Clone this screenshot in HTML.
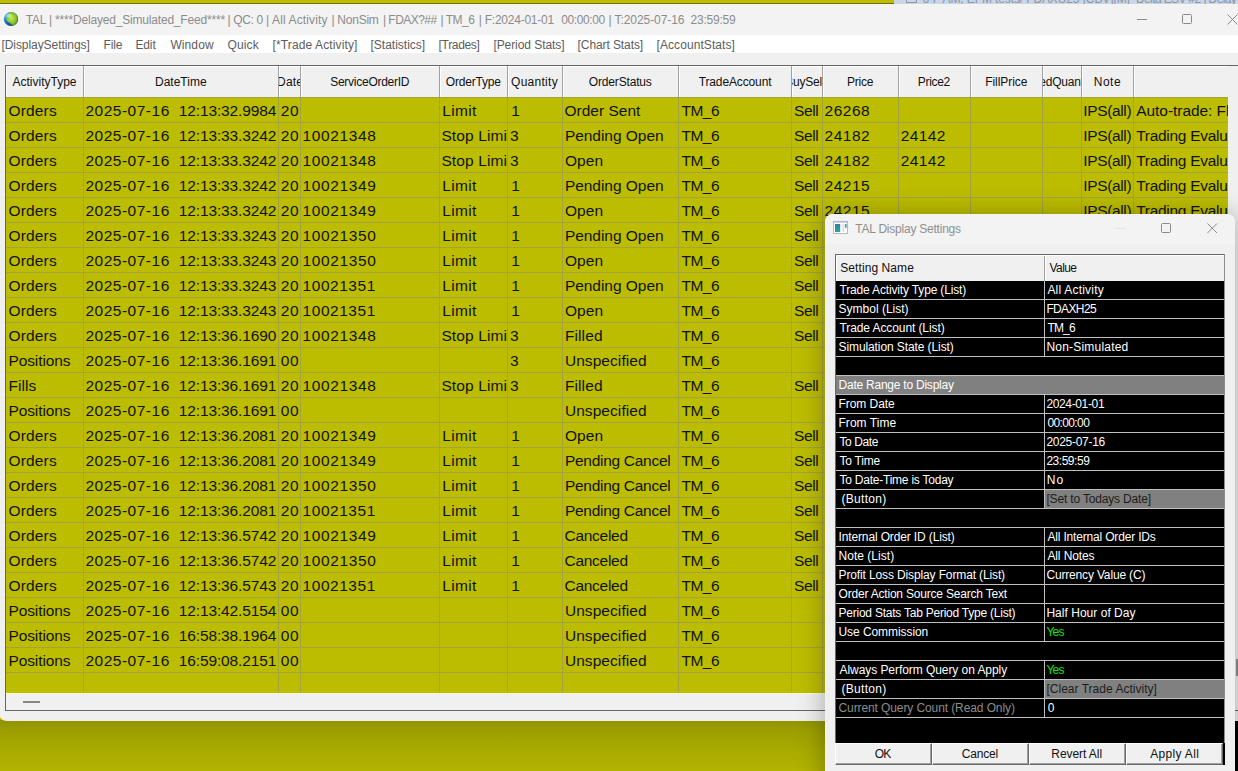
<!DOCTYPE html>
<html lang="en"><head><meta charset="utf-8"><title>TAL</title>
<style>
*{box-sizing:border-box;margin:0;padding:0}
html,body{width:1238px;height:771px;overflow:hidden}
body{position:relative;background:#bdbd00;font-family:"Liberation Sans",sans-serif;font-size:12px;color:#000}
.abs{position:absolute}
#desk{left:0;top:0;width:1238px;height:771px;background:#bcbc00}
#deskbot{left:0;top:720px;width:1238px;height:51px;background:linear-gradient(#909300 0,#9c9e00 10px,#a8aa00 30px,#b2b400 51px)}
#topline{left:0;top:3px;width:894px;height:1px;background:#6e6e10}
#topblue{left:894px;top:0;width:344px;height:5px;background:#c9d6e6;border-bottom:1px solid #bccbdc;overflow:hidden;color:#8b95a3;font-size:12px;line-height:14px;white-space:pre}
#topblue span{position:absolute;top:-8px}
#topblue i{position:absolute;left:12px;top:-6px;width:11px;height:9px;border:1px solid #8b95a3}
#win{left:-1px;top:4px;width:1250px;height:717px;background:#f0f0f0;border-radius:0 0 0 8px;overflow:hidden}
#title{left:0;top:0;width:100%;height:31px;background:#f3f3f3}
.tt{position:absolute;top:9px;color:#8c8c8c;white-space:pre;font-size:12px;line-height:14px}
#menu{left:0;top:31px;width:100%;height:18px;background:#fff}
.mi{position:absolute;top:34px;color:#5c5c5c;white-space:pre;font-size:12px;line-height:14px}
#grid{left:6px;top:61px;width:1244px;height:646px;border-left:1px solid #646464;border-top:1px solid #646464;border-bottom:1px solid #646464;background:#f0f0f0;overflow:hidden}
#ghead{left:0;top:0;width:1222px;height:31px;background:#f5f5f5}
.hc{position:absolute;top:0;height:31px;overflow:hidden;border-right:1px solid #a0a0a0;box-shadow:inset 1px 1px 0 #fff;background:#f0f0f0}
.hc span{position:absolute;top:9px;white-space:pre;font-size:12px;line-height:14px;color:#111}
#gbody{left:0;top:31px;width:1222px;height:596px;background:#bcbd00;overflow:hidden}
.hl{position:absolute;left:0;width:1222px;height:1px;background:#a3a340}
.vl{position:absolute;top:0;width:1px;height:596px;background:#a3a340}
.c{position:absolute;height:24px;overflow:hidden;white-space:pre;font-size:15.5px;line-height:18px;color:#111}
.c span{position:absolute;top:4px}
#hscroll{left:0;top:627px;width:1222px;height:18px;background:#f0f0f0;border-top:1px solid #ffffc8}
#thumb{left:17px;top:7px;width:17px;height:2px;background:#868686}
</style></head><body>
<div id="desk" class="abs"></div>
<div id="deskbot" class="abs"></div>
<div id="topline" class="abs"></div>
<div id="topblue" class="abs"><i></i><span style="left:28.40px;letter-spacing:-0.115px">6-F AM, EFM tests/ FDAXU25 [CBV][M] </span><span style="left:242.00px;letter-spacing:-0.615px">Delta ESV #2 | Delay</span></div>
<div id="win" class="abs">
<div id="title" class="abs"></div>

<svg class="abs" style="left:4px;top:7px" width="16" height="16" viewBox="0 0 16 16"><defs><radialGradient id="gg" cx="32%" cy="30%" r="75%"><stop offset="0" stop-color="#8fe0f4"/><stop offset=".45" stop-color="#2b86cf"/><stop offset="1" stop-color="#0b2f6e"/></radialGradient><radialGradient id="gl" cx="42%" cy="45%" r="65%"><stop offset="0" stop-color="#c4ea4e"/><stop offset=".6" stop-color="#8cc42c"/><stop offset="1" stop-color="#4c7f1c"/></radialGradient></defs><circle cx="8" cy="8" r="7.100" fill="url(#gg)"/><path d="M7 1.300C10 .6 13.500 2.500 14.700 6c.7 3-.5 5.500-2 7-1 1.200-2.500 1.800-3.500 1.600-.4-1.600-1.500-2.400-3-3.100-2-1-2.800-2.500-2.500-4.500.3-2 1-3.500 2-4.500.5-.7 1-1.100 1.300-1.200z" fill="url(#gl)"/><ellipse cx="6.300" cy="4.800" rx="2.600" ry="1.800" fill="#d8f6e4" opacity=".55"/></svg>
<div class="tt" style="left:26.70px;letter-spacing:-0.186px">TAL | ****Delayed_Simulated_Feed****</div>
<div class="tt" style="left:228.50px;letter-spacing:-0.35px">| QC: 0</div>
<div class="tt" style="left:267.00px;letter-spacing:0.123px">| All Activity</div>
<div class="tt" style="left:332.40px;letter-spacing:-0.243px">| NonSim</div>
<div class="tt" style="left:384.00px;letter-spacing:-0.55px">| FDAX?##</div>
<div class="tt" style="left:441.50px;letter-spacing:-0.52px">| TM_6</div>
<div class="tt" style="left:479.70px;letter-spacing:-0.231px">| F:2024-01-01</div>
<div class="tt" style="left:562.30px;letter-spacing:-0.4px">00:00:00</div>
<div class="tt" style="left:609.40px;letter-spacing:-0.062px">| T:2025-07-16</div>
<div class="tt" style="left:691.60px;letter-spacing:-0.229px">23:59:59</div>
<svg class="abs" style="left:1130px;top:5px" width="120" height="22" viewBox="0 0 120 22"><g fill="none" stroke="#8a8a8a" stroke-width="1"><path d="M8 10.500h10"/><rect x="53.500" y="5.500" width="9" height="9" rx="1"/><path d="M98.500 5.500l10 10M108.500 5.500l-10 10"/></g></svg>
<div id="menu" class="abs"></div>
<div class="mi" style="left:2.40px;letter-spacing:-0.056px">[DisplaySettings]</div>
<div class="mi" style="left:104.60px;letter-spacing:-0.167px">File</div>
<div class="mi" style="left:136.40px;letter-spacing:-0.1px">Edit</div>
<div class="mi" style="left:171.40px;letter-spacing:0.1px">Window</div>
<div class="mi" style="left:228.50px;letter-spacing:0.15px">Quick</div>
<div class="mi" style="left:273.50px;letter-spacing:0.125px">[*Trade Activity]</div>
<div class="mi" style="left:371.50px;letter-spacing:0.0px">[Statistics]</div>
<div class="mi" style="left:439.60px;letter-spacing:-0.329px">[Trades]</div>
<div class="mi" style="left:494.40px;letter-spacing:-0.069px">[Period Stats]</div>
<div class="mi" style="left:578.60px;letter-spacing:-0.092px">[Chart Stats]</div>
<div class="mi" style="left:657.50px;letter-spacing:0.077px">[AccountStats]</div>
<div id="grid" class="abs"><div id="ghead" class="abs">
<div class="hc" style="left:0px;width:78px"><span style="left:6.50px;letter-spacing:0.0px">ActivityType</span></div>
<div class="hc" style="left:78px;width:195px"><span style="left:71.00px;letter-spacing:0.0px">DateTime</span></div>
<div class="hc" style="left:273px;width:22px"><span style="left:-1.90px;letter-spacing:0.133px">Date</span></div>
<div class="hc" style="left:295px;width:139px"><span style="left:29.15px;letter-spacing:-0.254px">ServiceOrderID</span></div>
<div class="hc" style="left:434px;width:68px"><span style="left:5.85px;letter-spacing:-0.213px">OrderType</span></div>
<div class="hc" style="left:502px;width:55px"><span style="left:3.05px;letter-spacing:0.271px">Quantity</span></div>
<div class="hc" style="left:557px;width:116px"><span style="left:25.85px;letter-spacing:-0.17px">OrderStatus</span></div>
<div class="hc" style="left:673px;width:113px"><span style="left:19.70px;letter-spacing:-0.127px">TradeAccount</span></div>
<div class="hc" style="left:786px;width:31px"><span style="left:-6.78px;letter-spacing:-0.225px">BuySell</span></div>
<div class="hc" style="left:817px;width:76px"><span style="left:24.00px;letter-spacing:-0.25px">Price</span></div>
<div class="hc" style="left:893px;width:72px"><span style="left:18.85px;letter-spacing:-0.34px">Price2</span></div>
<div class="hc" style="left:965px;width:72px"><span style="left:14.25px;letter-spacing:-0.062px">FillPrice</span></div>
<div class="hc" style="left:1037px;width:39px"><span style="left:-18.30px;letter-spacing:-0.2px">FilledQuantity</span></div>
<div class="hc" style="left:1076px;width:52px"><span style="left:11.75px;letter-spacing:0.5px">Note</span></div>
<div class="hc" style="left:1128px;width:94px;border-right:0"></div>
</div><div id="gbody" class="abs">
<div class="hl" style="top:0px"></div>
<div class="hl" style="top:25px"></div>
<div class="hl" style="top:50px"></div>
<div class="hl" style="top:75px"></div>
<div class="hl" style="top:100px"></div>
<div class="hl" style="top:125px"></div>
<div class="hl" style="top:150px"></div>
<div class="hl" style="top:175px"></div>
<div class="hl" style="top:200px"></div>
<div class="hl" style="top:225px"></div>
<div class="hl" style="top:250px"></div>
<div class="hl" style="top:275px"></div>
<div class="hl" style="top:300px"></div>
<div class="hl" style="top:325px"></div>
<div class="hl" style="top:350px"></div>
<div class="hl" style="top:375px"></div>
<div class="hl" style="top:400px"></div>
<div class="hl" style="top:425px"></div>
<div class="hl" style="top:450px"></div>
<div class="hl" style="top:475px"></div>
<div class="hl" style="top:500px"></div>
<div class="hl" style="top:525px"></div>
<div class="hl" style="top:550px"></div>
<div class="hl" style="top:575px"></div>
<div class="hl" style="top:600px"></div>
<div class="vl" style="left:77px"></div>
<div class="vl" style="left:272px"></div>
<div class="vl" style="left:294px"></div>
<div class="vl" style="left:433px"></div>
<div class="vl" style="left:501px"></div>
<div class="vl" style="left:556px"></div>
<div class="vl" style="left:672px"></div>
<div class="vl" style="left:785px"></div>
<div class="vl" style="left:816px"></div>
<div class="vl" style="left:892px"></div>
<div class="vl" style="left:964px"></div>
<div class="vl" style="left:1036px"></div>
<div class="vl" style="left:1075px"></div>
<div class="vl" style="left:1127px"></div>
<div class="c" style="left:0px;top:1px;width:77px"><span style="left:2.40px;letter-spacing:0.18px">Orders</span></div>
<div class="c" style="left:78px;top:1px;width:194px"><span style="left:1.40px;letter-spacing:0.511px">2025-07-16 </span><span style="left:94.80px;letter-spacing:-0.133px">12:13:32.9984</span></div>
<div class="c" style="left:273px;top:1px;width:21px"><span style="left:1.70px;letter-spacing:0.7px">20</span></div>
<div class="c" style="left:434px;top:1px;width:67px"><span style="left:2.20px;letter-spacing:0.325px">Limit</span></div>
<div class="c" style="left:502px;top:1px;width:54px"><span style="left:3.30px;letter-spacing:0px">1</span></div>
<div class="c" style="left:557px;top:1px;width:115px"><span style="left:1.50px;letter-spacing:0.011px">Order Sent</span></div>
<div class="c" style="left:673px;top:1px;width:112px"><span style="left:2.40px;letter-spacing:-0.467px">TM_6</span></div>
<div class="c" style="left:786px;top:1px;width:30px"><span style="left:1.90px;letter-spacing:-0.333px">Sell</span></div>
<div class="c" style="left:817px;top:1px;width:75px"><span style="left:1.50px;letter-spacing:0.525px">26268</span></div>
<div class="c" style="left:1076px;top:1px;width:51px"><span style="left:1.30px;letter-spacing:-0.357px">IPS(all)</span></div>
<div class="c" style="left:1128px;top:1px;width:94px"><span style="left:2.20px;letter-spacing:-0.046px">Auto-trade: Fl</span></div>
<div class="c" style="left:0px;top:26px;width:77px"><span style="left:2.40px;letter-spacing:0.18px">Orders</span></div>
<div class="c" style="left:78px;top:26px;width:194px"><span style="left:1.40px;letter-spacing:0.511px">2025-07-16 </span><span style="left:94.80px;letter-spacing:-0.133px">12:13:33.3242</span></div>
<div class="c" style="left:273px;top:26px;width:21px"><span style="left:1.70px;letter-spacing:0.7px">20</span></div>
<div class="c" style="left:295px;top:26px;width:138px"><span style="left:1.60px;letter-spacing:0.6px">10021348</span></div>
<div class="c" style="left:434px;top:26px;width:67px"><span style="left:1.40px;letter-spacing:0.133px">Stop Limit</span></div>
<div class="c" style="left:502px;top:26px;width:54px"><span style="left:1.90px;letter-spacing:0px">3</span></div>
<div class="c" style="left:557px;top:26px;width:115px"><span style="left:1.90px;letter-spacing:-0.036px">Pending Open</span></div>
<div class="c" style="left:673px;top:26px;width:112px"><span style="left:2.40px;letter-spacing:-0.467px">TM_6</span></div>
<div class="c" style="left:786px;top:26px;width:30px"><span style="left:1.90px;letter-spacing:-0.333px">Sell</span></div>
<div class="c" style="left:817px;top:26px;width:75px"><span style="left:1.50px;letter-spacing:0.525px">24182</span></div>
<div class="c" style="left:893px;top:26px;width:71px"><span style="left:1.80px;letter-spacing:0.35px">24142</span></div>
<div class="c" style="left:1076px;top:26px;width:51px"><span style="left:1.30px;letter-spacing:-0.357px">IPS(all)</span></div>
<div class="c" style="left:1128px;top:26px;width:94px"><span style="left:2.20px;letter-spacing:-0.283px">Trading Evalu</span></div>
<div class="c" style="left:0px;top:51px;width:77px"><span style="left:2.40px;letter-spacing:0.18px">Orders</span></div>
<div class="c" style="left:78px;top:51px;width:194px"><span style="left:1.40px;letter-spacing:0.511px">2025-07-16 </span><span style="left:94.80px;letter-spacing:-0.133px">12:13:33.3242</span></div>
<div class="c" style="left:273px;top:51px;width:21px"><span style="left:1.70px;letter-spacing:0.7px">20</span></div>
<div class="c" style="left:295px;top:51px;width:138px"><span style="left:1.60px;letter-spacing:0.6px">10021348</span></div>
<div class="c" style="left:434px;top:51px;width:67px"><span style="left:1.40px;letter-spacing:0.133px">Stop Limit</span></div>
<div class="c" style="left:502px;top:51px;width:54px"><span style="left:1.90px;letter-spacing:0px">3</span></div>
<div class="c" style="left:557px;top:51px;width:115px"><span style="left:1.90px;letter-spacing:0.1px">Open</span></div>
<div class="c" style="left:673px;top:51px;width:112px"><span style="left:2.40px;letter-spacing:-0.467px">TM_6</span></div>
<div class="c" style="left:786px;top:51px;width:30px"><span style="left:1.90px;letter-spacing:-0.333px">Sell</span></div>
<div class="c" style="left:817px;top:51px;width:75px"><span style="left:1.50px;letter-spacing:0.525px">24182</span></div>
<div class="c" style="left:893px;top:51px;width:71px"><span style="left:1.80px;letter-spacing:0.35px">24142</span></div>
<div class="c" style="left:1076px;top:51px;width:51px"><span style="left:1.30px;letter-spacing:-0.357px">IPS(all)</span></div>
<div class="c" style="left:1128px;top:51px;width:94px"><span style="left:2.20px;letter-spacing:-0.283px">Trading Evalu</span></div>
<div class="c" style="left:0px;top:76px;width:77px"><span style="left:2.40px;letter-spacing:0.18px">Orders</span></div>
<div class="c" style="left:78px;top:76px;width:194px"><span style="left:1.40px;letter-spacing:0.511px">2025-07-16 </span><span style="left:94.80px;letter-spacing:-0.133px">12:13:33.3242</span></div>
<div class="c" style="left:273px;top:76px;width:21px"><span style="left:1.70px;letter-spacing:0.7px">20</span></div>
<div class="c" style="left:295px;top:76px;width:138px"><span style="left:1.60px;letter-spacing:0.6px">10021349</span></div>
<div class="c" style="left:434px;top:76px;width:67px"><span style="left:2.20px;letter-spacing:0.325px">Limit</span></div>
<div class="c" style="left:502px;top:76px;width:54px"><span style="left:3.30px;letter-spacing:0px">1</span></div>
<div class="c" style="left:557px;top:76px;width:115px"><span style="left:1.90px;letter-spacing:-0.036px">Pending Open</span></div>
<div class="c" style="left:673px;top:76px;width:112px"><span style="left:2.40px;letter-spacing:-0.467px">TM_6</span></div>
<div class="c" style="left:786px;top:76px;width:30px"><span style="left:1.90px;letter-spacing:-0.333px">Sell</span></div>
<div class="c" style="left:817px;top:76px;width:75px"><span style="left:1.50px;letter-spacing:0.525px">24215</span></div>
<div class="c" style="left:1076px;top:76px;width:51px"><span style="left:1.30px;letter-spacing:-0.357px">IPS(all)</span></div>
<div class="c" style="left:1128px;top:76px;width:94px"><span style="left:2.20px;letter-spacing:-0.283px">Trading Evalu</span></div>
<div class="c" style="left:0px;top:101px;width:77px"><span style="left:2.40px;letter-spacing:0.18px">Orders</span></div>
<div class="c" style="left:78px;top:101px;width:194px"><span style="left:1.40px;letter-spacing:0.511px">2025-07-16 </span><span style="left:94.80px;letter-spacing:-0.133px">12:13:33.3242</span></div>
<div class="c" style="left:273px;top:101px;width:21px"><span style="left:1.70px;letter-spacing:0.7px">20</span></div>
<div class="c" style="left:295px;top:101px;width:138px"><span style="left:1.60px;letter-spacing:0.6px">10021349</span></div>
<div class="c" style="left:434px;top:101px;width:67px"><span style="left:2.20px;letter-spacing:0.325px">Limit</span></div>
<div class="c" style="left:502px;top:101px;width:54px"><span style="left:3.30px;letter-spacing:0px">1</span></div>
<div class="c" style="left:557px;top:101px;width:115px"><span style="left:1.90px;letter-spacing:0.1px">Open</span></div>
<div class="c" style="left:673px;top:101px;width:112px"><span style="left:2.40px;letter-spacing:-0.467px">TM_6</span></div>
<div class="c" style="left:786px;top:101px;width:30px"><span style="left:1.90px;letter-spacing:-0.333px">Sell</span></div>
<div class="c" style="left:817px;top:101px;width:75px"><span style="left:1.50px;letter-spacing:0.525px">24215</span></div>
<div class="c" style="left:1076px;top:101px;width:51px"><span style="left:1.30px;letter-spacing:-0.357px">IPS(all)</span></div>
<div class="c" style="left:1128px;top:101px;width:94px"><span style="left:2.20px;letter-spacing:-0.283px">Trading Evalu</span></div>
<div class="c" style="left:0px;top:126px;width:77px"><span style="left:2.40px;letter-spacing:0.18px">Orders</span></div>
<div class="c" style="left:78px;top:126px;width:194px"><span style="left:1.40px;letter-spacing:0.511px">2025-07-16 </span><span style="left:94.80px;letter-spacing:-0.133px">12:13:33.3243</span></div>
<div class="c" style="left:273px;top:126px;width:21px"><span style="left:1.70px;letter-spacing:0.7px">20</span></div>
<div class="c" style="left:295px;top:126px;width:138px"><span style="left:1.60px;letter-spacing:0.6px">10021350</span></div>
<div class="c" style="left:434px;top:126px;width:67px"><span style="left:2.20px;letter-spacing:0.325px">Limit</span></div>
<div class="c" style="left:502px;top:126px;width:54px"><span style="left:3.30px;letter-spacing:0px">1</span></div>
<div class="c" style="left:557px;top:126px;width:115px"><span style="left:1.90px;letter-spacing:-0.036px">Pending Open</span></div>
<div class="c" style="left:673px;top:126px;width:112px"><span style="left:2.40px;letter-spacing:-0.467px">TM_6</span></div>
<div class="c" style="left:786px;top:126px;width:30px"><span style="left:1.90px;letter-spacing:-0.333px">Sell</span></div>
<div class="c" style="left:817px;top:126px;width:75px"><span style="left:1.50px;letter-spacing:0.525px">24215</span></div>
<div class="c" style="left:1076px;top:126px;width:51px"><span style="left:1.30px;letter-spacing:-0.357px">IPS(all)</span></div>
<div class="c" style="left:1128px;top:126px;width:94px"><span style="left:2.20px;letter-spacing:-0.283px">Trading Evalu</span></div>
<div class="c" style="left:0px;top:151px;width:77px"><span style="left:2.40px;letter-spacing:0.18px">Orders</span></div>
<div class="c" style="left:78px;top:151px;width:194px"><span style="left:1.40px;letter-spacing:0.511px">2025-07-16 </span><span style="left:94.80px;letter-spacing:-0.133px">12:13:33.3243</span></div>
<div class="c" style="left:273px;top:151px;width:21px"><span style="left:1.70px;letter-spacing:0.7px">20</span></div>
<div class="c" style="left:295px;top:151px;width:138px"><span style="left:1.60px;letter-spacing:0.6px">10021350</span></div>
<div class="c" style="left:434px;top:151px;width:67px"><span style="left:2.20px;letter-spacing:0.325px">Limit</span></div>
<div class="c" style="left:502px;top:151px;width:54px"><span style="left:3.30px;letter-spacing:0px">1</span></div>
<div class="c" style="left:557px;top:151px;width:115px"><span style="left:1.90px;letter-spacing:0.1px">Open</span></div>
<div class="c" style="left:673px;top:151px;width:112px"><span style="left:2.40px;letter-spacing:-0.467px">TM_6</span></div>
<div class="c" style="left:786px;top:151px;width:30px"><span style="left:1.90px;letter-spacing:-0.333px">Sell</span></div>
<div class="c" style="left:817px;top:151px;width:75px"><span style="left:1.50px;letter-spacing:0.525px">24215</span></div>
<div class="c" style="left:1076px;top:151px;width:51px"><span style="left:1.30px;letter-spacing:-0.357px">IPS(all)</span></div>
<div class="c" style="left:1128px;top:151px;width:94px"><span style="left:2.20px;letter-spacing:-0.283px">Trading Evalu</span></div>
<div class="c" style="left:0px;top:176px;width:77px"><span style="left:2.40px;letter-spacing:0.18px">Orders</span></div>
<div class="c" style="left:78px;top:176px;width:194px"><span style="left:1.40px;letter-spacing:0.511px">2025-07-16 </span><span style="left:94.80px;letter-spacing:-0.133px">12:13:33.3243</span></div>
<div class="c" style="left:273px;top:176px;width:21px"><span style="left:1.70px;letter-spacing:0.7px">20</span></div>
<div class="c" style="left:295px;top:176px;width:138px"><span style="left:1.60px;letter-spacing:0.529px">10021351</span></div>
<div class="c" style="left:434px;top:176px;width:67px"><span style="left:2.20px;letter-spacing:0.325px">Limit</span></div>
<div class="c" style="left:502px;top:176px;width:54px"><span style="left:3.30px;letter-spacing:0px">1</span></div>
<div class="c" style="left:557px;top:176px;width:115px"><span style="left:1.90px;letter-spacing:-0.036px">Pending Open</span></div>
<div class="c" style="left:673px;top:176px;width:112px"><span style="left:2.40px;letter-spacing:-0.467px">TM_6</span></div>
<div class="c" style="left:786px;top:176px;width:30px"><span style="left:1.90px;letter-spacing:-0.333px">Sell</span></div>
<div class="c" style="left:817px;top:176px;width:75px"><span style="left:1.50px;letter-spacing:0.525px">24215</span></div>
<div class="c" style="left:1076px;top:176px;width:51px"><span style="left:1.30px;letter-spacing:-0.357px">IPS(all)</span></div>
<div class="c" style="left:1128px;top:176px;width:94px"><span style="left:2.20px;letter-spacing:-0.283px">Trading Evalu</span></div>
<div class="c" style="left:0px;top:201px;width:77px"><span style="left:2.40px;letter-spacing:0.18px">Orders</span></div>
<div class="c" style="left:78px;top:201px;width:194px"><span style="left:1.40px;letter-spacing:0.511px">2025-07-16 </span><span style="left:94.80px;letter-spacing:-0.133px">12:13:33.3243</span></div>
<div class="c" style="left:273px;top:201px;width:21px"><span style="left:1.70px;letter-spacing:0.7px">20</span></div>
<div class="c" style="left:295px;top:201px;width:138px"><span style="left:1.60px;letter-spacing:0.529px">10021351</span></div>
<div class="c" style="left:434px;top:201px;width:67px"><span style="left:2.20px;letter-spacing:0.325px">Limit</span></div>
<div class="c" style="left:502px;top:201px;width:54px"><span style="left:3.30px;letter-spacing:0px">1</span></div>
<div class="c" style="left:557px;top:201px;width:115px"><span style="left:1.90px;letter-spacing:0.1px">Open</span></div>
<div class="c" style="left:673px;top:201px;width:112px"><span style="left:2.40px;letter-spacing:-0.467px">TM_6</span></div>
<div class="c" style="left:786px;top:201px;width:30px"><span style="left:1.90px;letter-spacing:-0.333px">Sell</span></div>
<div class="c" style="left:817px;top:201px;width:75px"><span style="left:1.50px;letter-spacing:0.525px">24215</span></div>
<div class="c" style="left:1076px;top:201px;width:51px"><span style="left:1.30px;letter-spacing:-0.357px">IPS(all)</span></div>
<div class="c" style="left:1128px;top:201px;width:94px"><span style="left:2.20px;letter-spacing:-0.283px">Trading Evalu</span></div>
<div class="c" style="left:0px;top:226px;width:77px"><span style="left:2.40px;letter-spacing:0.18px">Orders</span></div>
<div class="c" style="left:78px;top:226px;width:194px"><span style="left:1.40px;letter-spacing:0.511px">2025-07-16 </span><span style="left:94.80px;letter-spacing:-0.133px">12:13:36.1690</span></div>
<div class="c" style="left:273px;top:226px;width:21px"><span style="left:1.70px;letter-spacing:0.7px">20</span></div>
<div class="c" style="left:295px;top:226px;width:138px"><span style="left:1.60px;letter-spacing:0.6px">10021348</span></div>
<div class="c" style="left:434px;top:226px;width:67px"><span style="left:1.40px;letter-spacing:0.133px">Stop Limit</span></div>
<div class="c" style="left:502px;top:226px;width:54px"><span style="left:1.90px;letter-spacing:0px">3</span></div>
<div class="c" style="left:557px;top:226px;width:115px"><span style="left:1.90px;letter-spacing:0.12px">Filled</span></div>
<div class="c" style="left:673px;top:226px;width:112px"><span style="left:2.40px;letter-spacing:-0.467px">TM_6</span></div>
<div class="c" style="left:786px;top:226px;width:30px"><span style="left:1.90px;letter-spacing:-0.333px">Sell</span></div>
<div class="c" style="left:817px;top:226px;width:75px"><span style="left:1.50px;letter-spacing:0.525px">24182</span></div>
<div class="c" style="left:893px;top:226px;width:71px"><span style="left:1.80px;letter-spacing:0.35px">24142</span></div>
<div class="c" style="left:1076px;top:226px;width:51px"><span style="left:1.30px;letter-spacing:-0.357px">IPS(all)</span></div>
<div class="c" style="left:1128px;top:226px;width:94px"><span style="left:2.20px;letter-spacing:-0.283px">Trading Evalu</span></div>
<div class="c" style="left:0px;top:251px;width:77px"><span style="left:2.50px;letter-spacing:-0.113px">Positions</span></div>
<div class="c" style="left:78px;top:251px;width:194px"><span style="left:1.40px;letter-spacing:0.511px">2025-07-16 </span><span style="left:94.80px;letter-spacing:-0.133px">12:13:36.1691</span></div>
<div class="c" style="left:273px;top:251px;width:21px"><span style="left:1.70px;letter-spacing:0.7px">00</span></div>
<div class="c" style="left:502px;top:251px;width:54px"><span style="left:1.90px;letter-spacing:0px">3</span></div>
<div class="c" style="left:557px;top:251px;width:115px"><span style="left:1.90px;letter-spacing:0.07px">Unspecified</span></div>
<div class="c" style="left:673px;top:251px;width:112px"><span style="left:2.40px;letter-spacing:-0.467px">TM_6</span></div>
<div class="c" style="left:0px;top:276px;width:77px"><span style="left:2.50px;letter-spacing:0.025px">Fills</span></div>
<div class="c" style="left:78px;top:276px;width:194px"><span style="left:1.40px;letter-spacing:0.511px">2025-07-16 </span><span style="left:94.80px;letter-spacing:-0.133px">12:13:36.1691</span></div>
<div class="c" style="left:273px;top:276px;width:21px"><span style="left:1.70px;letter-spacing:0.7px">20</span></div>
<div class="c" style="left:295px;top:276px;width:138px"><span style="left:1.60px;letter-spacing:0.6px">10021348</span></div>
<div class="c" style="left:434px;top:276px;width:67px"><span style="left:1.40px;letter-spacing:0.133px">Stop Limit</span></div>
<div class="c" style="left:502px;top:276px;width:54px"><span style="left:1.90px;letter-spacing:0px">3</span></div>
<div class="c" style="left:557px;top:276px;width:115px"><span style="left:1.90px;letter-spacing:0.12px">Filled</span></div>
<div class="c" style="left:673px;top:276px;width:112px"><span style="left:2.40px;letter-spacing:-0.467px">TM_6</span></div>
<div class="c" style="left:786px;top:276px;width:30px"><span style="left:1.90px;letter-spacing:-0.333px">Sell</span></div>
<div class="c" style="left:817px;top:276px;width:75px"><span style="left:1.50px;letter-spacing:0.525px">24182</span></div>
<div class="c" style="left:0px;top:301px;width:77px"><span style="left:2.50px;letter-spacing:-0.113px">Positions</span></div>
<div class="c" style="left:78px;top:301px;width:194px"><span style="left:1.40px;letter-spacing:0.511px">2025-07-16 </span><span style="left:94.80px;letter-spacing:-0.133px">12:13:36.1691</span></div>
<div class="c" style="left:273px;top:301px;width:21px"><span style="left:1.70px;letter-spacing:0.7px">00</span></div>
<div class="c" style="left:557px;top:301px;width:115px"><span style="left:1.90px;letter-spacing:0.07px">Unspecified</span></div>
<div class="c" style="left:673px;top:301px;width:112px"><span style="left:2.40px;letter-spacing:-0.467px">TM_6</span></div>
<div class="c" style="left:0px;top:326px;width:77px"><span style="left:2.40px;letter-spacing:0.18px">Orders</span></div>
<div class="c" style="left:78px;top:326px;width:194px"><span style="left:1.40px;letter-spacing:0.511px">2025-07-16 </span><span style="left:94.80px;letter-spacing:-0.133px">12:13:36.2081</span></div>
<div class="c" style="left:273px;top:326px;width:21px"><span style="left:1.70px;letter-spacing:0.7px">20</span></div>
<div class="c" style="left:295px;top:326px;width:138px"><span style="left:1.60px;letter-spacing:0.6px">10021349</span></div>
<div class="c" style="left:434px;top:326px;width:67px"><span style="left:2.20px;letter-spacing:0.325px">Limit</span></div>
<div class="c" style="left:502px;top:326px;width:54px"><span style="left:3.30px;letter-spacing:0px">1</span></div>
<div class="c" style="left:557px;top:326px;width:115px"><span style="left:1.90px;letter-spacing:0.1px">Open</span></div>
<div class="c" style="left:673px;top:326px;width:112px"><span style="left:2.40px;letter-spacing:-0.467px">TM_6</span></div>
<div class="c" style="left:786px;top:326px;width:30px"><span style="left:1.90px;letter-spacing:-0.333px">Sell</span></div>
<div class="c" style="left:817px;top:326px;width:75px"><span style="left:1.50px;letter-spacing:0.525px">24215</span></div>
<div class="c" style="left:0px;top:351px;width:77px"><span style="left:2.40px;letter-spacing:0.18px">Orders</span></div>
<div class="c" style="left:78px;top:351px;width:194px"><span style="left:1.40px;letter-spacing:0.511px">2025-07-16 </span><span style="left:94.80px;letter-spacing:-0.133px">12:13:36.2081</span></div>
<div class="c" style="left:273px;top:351px;width:21px"><span style="left:1.70px;letter-spacing:0.7px">20</span></div>
<div class="c" style="left:295px;top:351px;width:138px"><span style="left:1.60px;letter-spacing:0.6px">10021349</span></div>
<div class="c" style="left:434px;top:351px;width:67px"><span style="left:2.20px;letter-spacing:0.325px">Limit</span></div>
<div class="c" style="left:502px;top:351px;width:54px"><span style="left:3.30px;letter-spacing:0px">1</span></div>
<div class="c" style="left:557px;top:351px;width:115px"><span style="left:1.90px;letter-spacing:-0.277px">Pending Cancel</span></div>
<div class="c" style="left:673px;top:351px;width:112px"><span style="left:2.40px;letter-spacing:-0.467px">TM_6</span></div>
<div class="c" style="left:786px;top:351px;width:30px"><span style="left:1.90px;letter-spacing:-0.333px">Sell</span></div>
<div class="c" style="left:817px;top:351px;width:75px"><span style="left:1.50px;letter-spacing:0.525px">24215</span></div>
<div class="c" style="left:0px;top:376px;width:77px"><span style="left:2.40px;letter-spacing:0.18px">Orders</span></div>
<div class="c" style="left:78px;top:376px;width:194px"><span style="left:1.40px;letter-spacing:0.511px">2025-07-16 </span><span style="left:94.80px;letter-spacing:-0.133px">12:13:36.2081</span></div>
<div class="c" style="left:273px;top:376px;width:21px"><span style="left:1.70px;letter-spacing:0.7px">20</span></div>
<div class="c" style="left:295px;top:376px;width:138px"><span style="left:1.60px;letter-spacing:0.6px">10021350</span></div>
<div class="c" style="left:434px;top:376px;width:67px"><span style="left:2.20px;letter-spacing:0.325px">Limit</span></div>
<div class="c" style="left:502px;top:376px;width:54px"><span style="left:3.30px;letter-spacing:0px">1</span></div>
<div class="c" style="left:557px;top:376px;width:115px"><span style="left:1.90px;letter-spacing:-0.277px">Pending Cancel</span></div>
<div class="c" style="left:673px;top:376px;width:112px"><span style="left:2.40px;letter-spacing:-0.467px">TM_6</span></div>
<div class="c" style="left:786px;top:376px;width:30px"><span style="left:1.90px;letter-spacing:-0.333px">Sell</span></div>
<div class="c" style="left:817px;top:376px;width:75px"><span style="left:1.50px;letter-spacing:0.525px">24215</span></div>
<div class="c" style="left:0px;top:401px;width:77px"><span style="left:2.40px;letter-spacing:0.18px">Orders</span></div>
<div class="c" style="left:78px;top:401px;width:194px"><span style="left:1.40px;letter-spacing:0.511px">2025-07-16 </span><span style="left:94.80px;letter-spacing:-0.133px">12:13:36.2081</span></div>
<div class="c" style="left:273px;top:401px;width:21px"><span style="left:1.70px;letter-spacing:0.7px">20</span></div>
<div class="c" style="left:295px;top:401px;width:138px"><span style="left:1.60px;letter-spacing:0.529px">10021351</span></div>
<div class="c" style="left:434px;top:401px;width:67px"><span style="left:2.20px;letter-spacing:0.325px">Limit</span></div>
<div class="c" style="left:502px;top:401px;width:54px"><span style="left:3.30px;letter-spacing:0px">1</span></div>
<div class="c" style="left:557px;top:401px;width:115px"><span style="left:1.90px;letter-spacing:-0.277px">Pending Cancel</span></div>
<div class="c" style="left:673px;top:401px;width:112px"><span style="left:2.40px;letter-spacing:-0.467px">TM_6</span></div>
<div class="c" style="left:786px;top:401px;width:30px"><span style="left:1.90px;letter-spacing:-0.333px">Sell</span></div>
<div class="c" style="left:817px;top:401px;width:75px"><span style="left:1.50px;letter-spacing:0.525px">24215</span></div>
<div class="c" style="left:0px;top:426px;width:77px"><span style="left:2.40px;letter-spacing:0.18px">Orders</span></div>
<div class="c" style="left:78px;top:426px;width:194px"><span style="left:1.40px;letter-spacing:0.511px">2025-07-16 </span><span style="left:94.80px;letter-spacing:-0.133px">12:13:36.5742</span></div>
<div class="c" style="left:273px;top:426px;width:21px"><span style="left:1.70px;letter-spacing:0.7px">20</span></div>
<div class="c" style="left:295px;top:426px;width:138px"><span style="left:1.60px;letter-spacing:0.6px">10021349</span></div>
<div class="c" style="left:434px;top:426px;width:67px"><span style="left:2.20px;letter-spacing:0.325px">Limit</span></div>
<div class="c" style="left:502px;top:426px;width:54px"><span style="left:3.30px;letter-spacing:0px">1</span></div>
<div class="c" style="left:557px;top:426px;width:115px"><span style="left:1.50px;letter-spacing:-0.271px">Canceled</span></div>
<div class="c" style="left:673px;top:426px;width:112px"><span style="left:2.40px;letter-spacing:-0.467px">TM_6</span></div>
<div class="c" style="left:786px;top:426px;width:30px"><span style="left:1.90px;letter-spacing:-0.333px">Sell</span></div>
<div class="c" style="left:817px;top:426px;width:75px"><span style="left:1.50px;letter-spacing:0.525px">24215</span></div>
<div class="c" style="left:0px;top:451px;width:77px"><span style="left:2.40px;letter-spacing:0.18px">Orders</span></div>
<div class="c" style="left:78px;top:451px;width:194px"><span style="left:1.40px;letter-spacing:0.511px">2025-07-16 </span><span style="left:94.80px;letter-spacing:-0.133px">12:13:36.5742</span></div>
<div class="c" style="left:273px;top:451px;width:21px"><span style="left:1.70px;letter-spacing:0.7px">20</span></div>
<div class="c" style="left:295px;top:451px;width:138px"><span style="left:1.60px;letter-spacing:0.6px">10021350</span></div>
<div class="c" style="left:434px;top:451px;width:67px"><span style="left:2.20px;letter-spacing:0.325px">Limit</span></div>
<div class="c" style="left:502px;top:451px;width:54px"><span style="left:3.30px;letter-spacing:0px">1</span></div>
<div class="c" style="left:557px;top:451px;width:115px"><span style="left:1.50px;letter-spacing:-0.271px">Canceled</span></div>
<div class="c" style="left:673px;top:451px;width:112px"><span style="left:2.40px;letter-spacing:-0.467px">TM_6</span></div>
<div class="c" style="left:786px;top:451px;width:30px"><span style="left:1.90px;letter-spacing:-0.333px">Sell</span></div>
<div class="c" style="left:817px;top:451px;width:75px"><span style="left:1.50px;letter-spacing:0.525px">24215</span></div>
<div class="c" style="left:0px;top:476px;width:77px"><span style="left:2.40px;letter-spacing:0.18px">Orders</span></div>
<div class="c" style="left:78px;top:476px;width:194px"><span style="left:1.40px;letter-spacing:0.511px">2025-07-16 </span><span style="left:94.80px;letter-spacing:-0.133px">12:13:36.5743</span></div>
<div class="c" style="left:273px;top:476px;width:21px"><span style="left:1.70px;letter-spacing:0.7px">20</span></div>
<div class="c" style="left:295px;top:476px;width:138px"><span style="left:1.60px;letter-spacing:0.529px">10021351</span></div>
<div class="c" style="left:434px;top:476px;width:67px"><span style="left:2.20px;letter-spacing:0.325px">Limit</span></div>
<div class="c" style="left:502px;top:476px;width:54px"><span style="left:3.30px;letter-spacing:0px">1</span></div>
<div class="c" style="left:557px;top:476px;width:115px"><span style="left:1.50px;letter-spacing:-0.271px">Canceled</span></div>
<div class="c" style="left:673px;top:476px;width:112px"><span style="left:2.40px;letter-spacing:-0.467px">TM_6</span></div>
<div class="c" style="left:786px;top:476px;width:30px"><span style="left:1.90px;letter-spacing:-0.333px">Sell</span></div>
<div class="c" style="left:817px;top:476px;width:75px"><span style="left:1.50px;letter-spacing:0.525px">24215</span></div>
<div class="c" style="left:0px;top:501px;width:77px"><span style="left:2.50px;letter-spacing:-0.113px">Positions</span></div>
<div class="c" style="left:78px;top:501px;width:194px"><span style="left:1.40px;letter-spacing:0.511px">2025-07-16 </span><span style="left:94.80px;letter-spacing:-0.133px">12:13:42.5154</span></div>
<div class="c" style="left:273px;top:501px;width:21px"><span style="left:1.70px;letter-spacing:0.7px">00</span></div>
<div class="c" style="left:557px;top:501px;width:115px"><span style="left:1.90px;letter-spacing:0.07px">Unspecified</span></div>
<div class="c" style="left:673px;top:501px;width:112px"><span style="left:2.40px;letter-spacing:-0.467px">TM_6</span></div>
<div class="c" style="left:0px;top:526px;width:77px"><span style="left:2.50px;letter-spacing:-0.113px">Positions</span></div>
<div class="c" style="left:78px;top:526px;width:194px"><span style="left:1.40px;letter-spacing:0.511px">2025-07-16 </span><span style="left:94.80px;letter-spacing:-0.133px">16:58:38.1964</span></div>
<div class="c" style="left:273px;top:526px;width:21px"><span style="left:1.70px;letter-spacing:0.7px">00</span></div>
<div class="c" style="left:557px;top:526px;width:115px"><span style="left:1.90px;letter-spacing:0.07px">Unspecified</span></div>
<div class="c" style="left:673px;top:526px;width:112px"><span style="left:2.40px;letter-spacing:-0.467px">TM_6</span></div>
<div class="c" style="left:0px;top:551px;width:77px"><span style="left:2.50px;letter-spacing:-0.113px">Positions</span></div>
<div class="c" style="left:78px;top:551px;width:194px"><span style="left:1.40px;letter-spacing:0.511px">2025-07-16 </span><span style="left:94.80px;letter-spacing:-0.133px">16:59:08.2151</span></div>
<div class="c" style="left:273px;top:551px;width:21px"><span style="left:1.70px;letter-spacing:0.7px">00</span></div>
<div class="c" style="left:557px;top:551px;width:115px"><span style="left:1.90px;letter-spacing:0.07px">Unspecified</span></div>
<div class="c" style="left:673px;top:551px;width:112px"><span style="left:2.40px;letter-spacing:-0.467px">TM_6</span></div>
</div><div id="hscroll" class="abs"><div id="thumb" class="abs"></div></div></div>
</div><style>
#dlg{left:825px;top:214px;width:410px;height:580px;background:#f0f0f0;border-radius:8px 8px 0 0;box-shadow:0 2px 24px 3px rgba(0,0,0,.26);overflow:hidden}
#dtitle{left:0;top:0;width:410px;height:30px;background:#f3f3f3}
#dtxt{top:8px;color:#8f8f8f;font-size:12px;line-height:14px;white-space:pre}
#dgrid{left:10px;top:40px;width:390px;height:489px;background:#000;border-left:1px solid #696969;border-top:1px solid #696969;border-right:1px solid #8c8c8c;overflow:hidden}
#dhead{left:0;top:0;width:388px;height:26px;background:#f0f0f0;border-top:1px solid #fff;border-left:1px solid #fff}
#dhead div{position:absolute;top:5px;font-size:12px;line-height:14px;color:#111;white-space:pre}
.dr{position:absolute;left:0;width:388px;height:19px;border-bottom:1px solid #c0c0c0;color:#fff;font-size:12px;line-height:14px;white-space:pre}
.dr .n{position:absolute;left:0;top:0;width:209px;height:18px;border-right:1px solid #c0c0c0;overflow:hidden}
.dr .v{position:absolute;left:209px;top:0;width:179px;height:18px;overflow:hidden}
.dr span{position:absolute;top:2px}
.dr.sec{background:#808080}
.dr.sec .n{width:388px;border-right:0}
.dr.btn .v{background:#808080;color:#1c1c1c}
.dr.grn .v{color:#19e019}
.dr.ro .n{color:#8c8c8c}
.db{position:absolute;top:529px;height:22px;width:97px;background:#f0f0f0;border:1px solid;border-color:#fff #696969 #696969 #fff;box-shadow:inset -1px -1px 0 #a0a0a0;font-size:12px;line-height:14px;color:#111;white-space:pre}
.db span{position:absolute;top:3px}
</style>
<i class="abs" style="left:1235px;top:721px;width:3px;height:50px;background:#000"></i><i class="abs" style="left:1236px;top:659px;width:2px;height:17px;background:#909090"></i>
<div id="dlg" class="abs">
<div id="dtitle" class="abs"></div>
<svg class="abs" style="left:8px;top:7px" width="15" height="13" viewBox="0 0 15 13"><defs><linearGradient id="tg" x1="0" y1="0" x2="0" y2="1"><stop offset="0" stop-color="#2a7fae"/><stop offset="1" stop-color="#2fa886"/></linearGradient></defs><rect x=".5" y=".5" width="14" height="12" fill="#fdfdfd" stroke="#b6bac3"/><path d="M.5 1h14" stroke="#a3b3cb" stroke-width="1.200"/><rect x="2" y="3" width="5.200" height="8" fill="url(#tg)"/><rect x="9.300" y="3" width="2" height="8" fill="#e6dde0"/><rect x="12" y="3" width="1.600" height="3.800" fill="#4c99ab"/></svg>

<div id="dtxt" class="abs" style="left:30.30px;letter-spacing:-0.226px">TAL Display Settings</div>
<svg class="abs" style="left:280px;top:4px" width="130" height="22" viewBox="0 0 130 22"><g fill="none" stroke="#8a8a8a" stroke-width="1"><path d="M10.500 10.500h10" stroke="#e2e2e2"/><rect x="56.500" y="5.500" width="9" height="9" rx="1"/><path d="M102.500 5.500l9.500 9.500M112 5.500l-9.500 9.500"/></g></svg>
<div id="dgrid" class="abs">
<div id="dhead" class="abs"><div style="left:3.30px;letter-spacing:0.073px">Setting Name</div><div style="left:212.60px;letter-spacing:-0.625px">Value</div><i class="abs" style="left:207px;top:0;width:1px;height:25px;background:#a0a0a0"></i><i class="abs" style="left:208px;top:0;width:1px;height:25px;background:#fff"></i></div>
<div class="dr " style="top:26px"><div class="n"><span style="left:3.50px;letter-spacing:-0.16px">Trade Activity Type (List)</span></div><div class="v"><span style="left:2.40px;letter-spacing:0.209px">All Activity</span></div></div>
<div class="dr " style="top:45px"><div class="n"><span style="left:2.50px;letter-spacing:0.008px">Symbol (List)</span></div><div class="v"><span style="left:1.40px;letter-spacing:-0.633px">FDAXH25</span></div></div>
<div class="dr " style="top:64px"><div class="n"><span style="left:3.50px;letter-spacing:-0.095px">Trade Account (List)</span></div><div class="v"><span style="left:2.40px;letter-spacing:-0.833px">TM_6</span></div></div>
<div class="dr " style="top:83px"><div class="n"><span style="left:2.50px;letter-spacing:-0.095px">Simulation State (List)</span></div><div class="v"><span style="left:1.40px;letter-spacing:0.208px">Non-Simulated</span></div></div>
<div class="dr" style="top:102px"></div>
<div class="dr sec" style="top:121px"><div class="n"><span style="left:2.50px;letter-spacing:-0.23px">Date Range to Display</span></div></div>
<div class="dr " style="top:140px"><div class="n"><span style="left:2.50px;letter-spacing:-0.05px">From Date</span></div><div class="v"><span style="left:1.40px;letter-spacing:-0.356px">2024-01-01</span></div></div>
<div class="dr " style="top:159px"><div class="n"><span style="left:2.50px;letter-spacing:0.037px">From Time</span></div><div class="v"><span style="left:2.40px;letter-spacing:-0.614px">00:00:00</span></div></div>
<div class="dr " style="top:178px"><div class="n"><span style="left:3.50px;letter-spacing:-0.4px">To Date</span></div><div class="v"><span style="left:1.40px;letter-spacing:-0.278px">2025-07-16</span></div></div>
<div class="dr " style="top:197px"><div class="n"><span style="left:3.50px;letter-spacing:-0.233px">To Time</span></div><div class="v"><span style="left:1.40px;letter-spacing:-0.471px">23:59:59</span></div></div>
<div class="dr " style="top:216px"><div class="n"><span style="left:3.50px;letter-spacing:-0.23px">To Date-Time is Today</span></div><div class="v"><span style="left:1.80px;letter-spacing:1.0px">No</span></div></div>
<div class="dr btn" style="top:235px"><div class="n"><span style="left:5.50px;letter-spacing:0.3px">(Button)</span></div><div class="v"><span style="left:1.40px;letter-spacing:-0.163px">[Set to Todays Date]</span></div></div>
<div class="dr" style="top:254px"></div>
<div class="dr " style="top:273px"><div class="n"><span style="left:2.50px;letter-spacing:-0.135px">Internal Order ID (List)</span></div><div class="v"><span style="left:2.40px;letter-spacing:-0.171px">All Internal Order IDs</span></div></div>
<div class="dr " style="top:292px"><div class="n"><span style="left:2.50px;letter-spacing:0.03px">Note (List)</span></div><div class="v"><span style="left:2.40px;letter-spacing:-0.1px">All Notes</span></div></div>
<div class="dr " style="top:311px"><div class="n"><span style="left:2.50px;letter-spacing:-0.128px">Profit Loss Display Format (List)</span></div><div class="v"><span style="left:1.40px;letter-spacing:-0.165px">Currency Value (C)</span></div></div>
<div class="dr " style="top:330px"><div class="n"><span style="left:2.50px;letter-spacing:-0.197px">Order Action Source Search Text</span></div><div class="v"></div></div>
<div class="dr " style="top:349px"><div class="n"><span style="left:2.50px;letter-spacing:-0.235px">Period Stats Tab Period Type (List)</span></div><div class="v"><span style="left:1.40px;letter-spacing:0.027px">Half Hour of Day</span></div></div>
<div class="dr grn" style="top:368px"><div class="n"><span style="left:2.50px;letter-spacing:-0.069px">Use Commission</span></div><div class="v"><span style="left:1.40px;letter-spacing:-0.7px">Yes</span></div></div>
<div class="dr" style="top:387px"></div>
<div class="dr grn" style="top:406px"><div class="n"><span style="left:3.50px;letter-spacing:-0.061px">Always Perform Query on Apply</span></div><div class="v"><span style="left:1.40px;letter-spacing:-0.7px">Yes</span></div></div>
<div class="dr btn" style="top:425px"><div class="n"><span style="left:5.50px;letter-spacing:0.3px">(Button)</span></div><div class="v"><span style="left:1.40px;letter-spacing:0.024px">[Clear Trade Activity]</span></div></div>
<div class="dr ro" style="top:444px"><div class="n"><span style="left:2.50px;letter-spacing:-0.1px">Current Query Count (Read Only)</span></div><div class="v"><span style="left:2.80px;letter-spacing:0px">0</span></div></div>
</div>
<div class="db" style="left:10px"><span style="left:38.80px;letter-spacing:-1.0px">OK</span></div>
<div class="db" style="left:107px"><span style="left:28.70px;letter-spacing:-0.18px">Cancel</span></div>
<div class="db" style="left:204px"><span style="left:21.30px;letter-spacing:-0.067px">Revert All</span></div>
<div class="db" style="left:301px"><span style="left:23.30px;letter-spacing:0.312px">Apply All</span></div>
<i class="abs" style="left:398px;top:529px;width:2px;height:22px;background:#000"></i>
</div></body></html>
